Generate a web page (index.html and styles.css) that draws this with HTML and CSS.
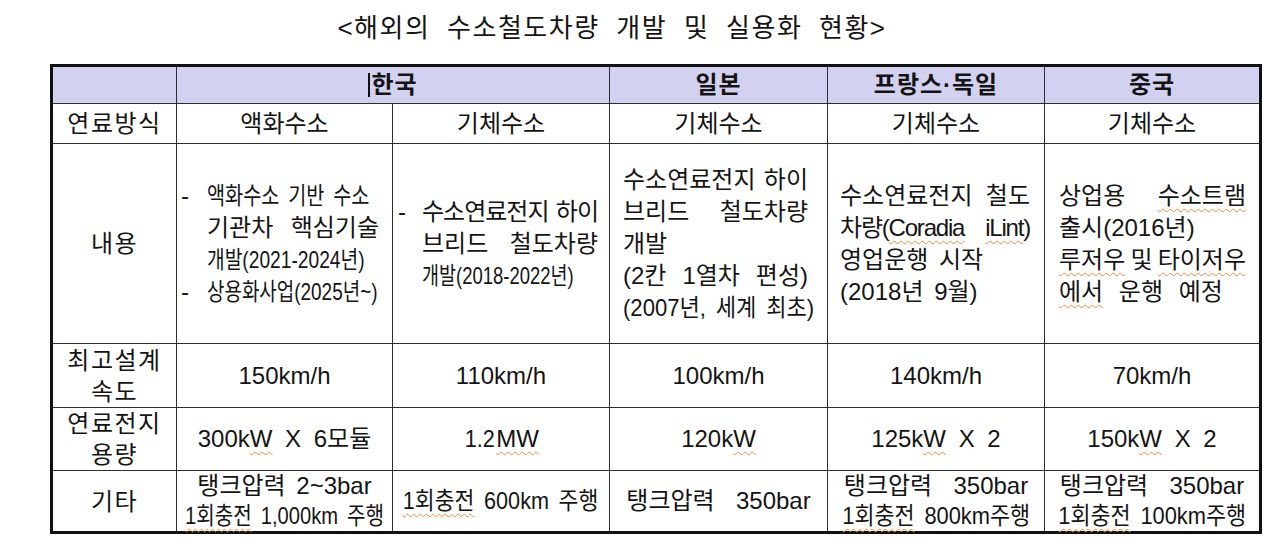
FILE: index.html
```html
<!DOCTYPE html>
<html lang="ko">
<head>
<meta charset="utf-8">
<title>해외의 수소철도차량 개발 및 실용화 현황</title>
<link rel="stylesheet" href="styles.css">
</head>
<body>
<div class="page">
  <h1 class="title">&lt;해외의 수소철도차량 개발 및 실용화 현황&gt;</h1>
  <table class="grid">
    <colgroup>
      <col class="c0"><col class="c1"><col class="c2"><col class="c3"><col class="c4"><col class="c5">
    </colgroup>
    <thead>
      <tr class="head">
        <th></th>
        <th colspan="2"><span class="caret"></span>한국</th>
        <th>일본</th>
        <th>프랑스·독일</th>
        <th>중국</th>
      </tr>
    </thead>
    <tbody>
      <tr class="r1">
        <td class="lab">연료방식</td>
        <td>액화수소</td>
        <td>기체수소</td>
        <td>기체수소</td>
        <td>기체수소</td>
        <td>기체수소</td>
      </tr>
      <tr class="r2">
        <td class="lab">내용</td>
        <td class="txt kr1">
          <div class="bul"><span class="dash">-</span><div class="body">
            <div class="ln"><span class="sq w82">액화수소 기반 수소</span></div>
            <div class="ln jl"><span>기관차</span><span>핵심기술</span></div>
            <div class="ln"><span class="sq w80">개발(2021-2024년)</span></div>
          </div></div>
          <div class="bul"><span class="dash">-</span><div class="body">
            <div class="ln"><span class="sq w79">상용화사업(2025년~)</span></div>
          </div></div>
        </td>
        <td class="txt kr2">
          <div class="bul"><span class="dash">-</span><div class="body">
            <div class="ln jl tight"><span>수소연료전지</span><span>하이</span></div>
            <div class="ln jl"><span>브리드</span><span>철도차량</span></div>
            <div class="ln"><span class="sq w77">개발(2018-2022년)</span></div>
          </div></div>
        </td>
        <td class="txt jp">
          <div class="ln jl"><span>수소연료전지</span><span>하이</span></div>
          <div class="ln jl"><span>브리드</span><span>철도차량</span></div>
          <div class="ln">개발</div>
          <div class="ln jl"><span>(2칸</span><span>1열차</span><span>편성)</span></div>
          <div class="ln"><span class="sq w92">(2007년, 세계 최초)</span></div>
        </td>
        <td class="txt fr">
          <div class="ln jl"><span>수소연료전지</span><span>철도</span></div>
          <div class="ln jl tighter"><span>차량(<span class="sp">Coradia</span></span><span><span class="sp">iLint</span>)</span></div>
          <div class="ln">영업운행 시작</div>
          <div class="ln">(2018년 9월)</div>
        </td>
        <td class="txt cn">
          <div class="ln jl"><span>상업용</span><span class="sp">수소트램</span></div>
          <div class="ln">출시(2016년)</div>
          <div class="ln jl"><span class="sp">루저우</span><span>및</span><span class="sp">타이저우</span></div>
          <div class="ln wide"><span class="sp">에서</span> 운행 예정</div>
        </td>
      </tr>
      <tr class="r3">
        <td class="lab">최고설계<br>속도</td>
        <td>150km/h</td>
        <td>110km/h</td>
        <td>100km/h</td>
        <td>140km/h</td>
        <td>70km/h</td>
      </tr>
      <tr class="r4">
        <td class="lab">연료전지<br>용량</td>
        <td>300k<span class="sp">W</span> X 6모듈</td>
        <td><span class="sq w90">1.2</span><span class="sp">MW</span></td>
        <td>120k<span class="sp">W</span></td>
        <td>125k<span class="sp">W</span> X 2</td>
        <td>150k<span class="sp">W</span> X 2</td>
      </tr>
      <tr class="r5">
        <td class="lab">기타</td>
        <td>
          <div class="cline">탱크압력 2~3bar</div>
          <div class="cline"><span class="sq w84"><span class="sp">1회충전</span> 1,000km 주행</span></div>
        </td>
        <td>
          <div class="cline"><span class="sq w90"><span class="sp">1회충전</span> 600km 주행</span></div>
        </td>
        <td>
          <div class="cline">탱크압력&nbsp; 350bar</div>
        </td>
        <td>
          <div class="cline">탱크압력&nbsp; 350bar</div>
          <div class="cline"><span class="sq w91"><span class="sp">1회충전</span> 800km주행</span></div>
        </td>
        <td>
          <div class="cline">탱크압력&nbsp; 350bar</div>
          <div class="cline"><span class="sq w91"><span class="sp">1회충전</span> 100km주행</span></div>
        </td>
      </tr>
    </tbody>
  </table>
</div>
</body>
</html>
```

FILE: styles.css
```css
html, body {
  margin: 0;
  padding: 0;
  background: #ffffff;
}

body {
  font-family: "Liberation Sans", "Noto Sans CJK KR", sans-serif;
  color: #141414;
}

.page {
  width: 1280px;
  height: 543px;
  padding-top: 12px;
  box-sizing: border-box;
}

.title {
  margin: 0;
  padding-right: 56px;
  text-align: center;
  font-size: 26px;
  font-weight: 400;
  line-height: 32px;
  letter-spacing: 1.5px;
  word-spacing: 8px;
}

.grid {
  margin: 20px 0 0 50px;
  border-collapse: collapse;
  table-layout: fixed;
  width: 1209px;
  border: 3px solid #111;
  font-size: 24px;
  line-height: 32px;
  word-spacing: 4px;
}

.c0 { width: 125px; }
.c1 { width: 216px; }
.c2 { width: 217px; }
.c3 { width: 218px; }
.c4 { width: 217px; }
.c5 { width: 216px; }

.grid th,
.grid td {
  border: 1.5px solid #2e2e2e;
  padding: 0;
  text-align: center;
  vertical-align: middle;
  white-space: nowrap;
}

.head th {
  background: #d2d2f0;
  font-weight: 700;
  height: 36px;
  letter-spacing: 1px;
}

.caret {
  display: inline-block;
  width: 2px;
  height: 24px;
  background: #111;
  vertical-align: -4px;
  margin-right: 1px;
}

.grid td.lab {
  letter-spacing: 1.5px;
  line-height: 31px;
}

.r1 td { height: 39px; }
.r2 td { height: 199px; }
.r3 td { height: 63px; }
.r4 td { height: 62px; word-spacing: 6px; }
.r5 td { height: 60px; line-height: 30px; }

.grid td.txt {
  text-align: left;
}

.grid td.kr1 { padding-left: 4px; padding-right: 13px; }
.grid td.kr2 { padding-left: 5px; padding-right: 11px; }
.grid td.jp  { padding-left: 13px; padding-right: 19px; }
.grid td.fr  { padding-left: 12px; padding-right: 14px; }
.grid td.cn  { padding-left: 14px; padding-right: 13px; }

.bul {
  display: flex;
}

.dash {
  flex: 0 0 26px;
}

.kr2 .dash {
  flex-basis: 24px;
}

.body {
  flex: 1;
  min-width: 0;
}

.ln {
  white-space: nowrap;
}

.jl {
  display: flex;
  justify-content: space-between;
}

.tight {
  letter-spacing: -1px;
}

.tighter {
  letter-spacing: -1.2px;
}

.wide {
  word-spacing: 9px;
}

.cline {
  display: flex;
  justify-content: center;
  white-space: nowrap;
}

.sq {
  display: inline-block;
  transform-origin: left center;
}

.cline .sq,
.r4 .sq {
  transform-origin: center center;
}

.w77 { transform: scaleX(0.77); }
.w79 { transform: scaleX(0.79); }
.w80 { transform: scaleX(0.80); }
.w82 { transform: scaleX(0.82); }
.w84 { transform: scaleX(0.84); }
.w90 { transform: scaleX(0.90); }
.w91 { transform: scaleX(0.91); }
.w92 { transform: scaleX(0.92); }

.sp {
  text-decoration: underline wavy #ec8a3c;
  text-decoration-thickness: 1px;
  text-underline-offset: 4px;
}
```
